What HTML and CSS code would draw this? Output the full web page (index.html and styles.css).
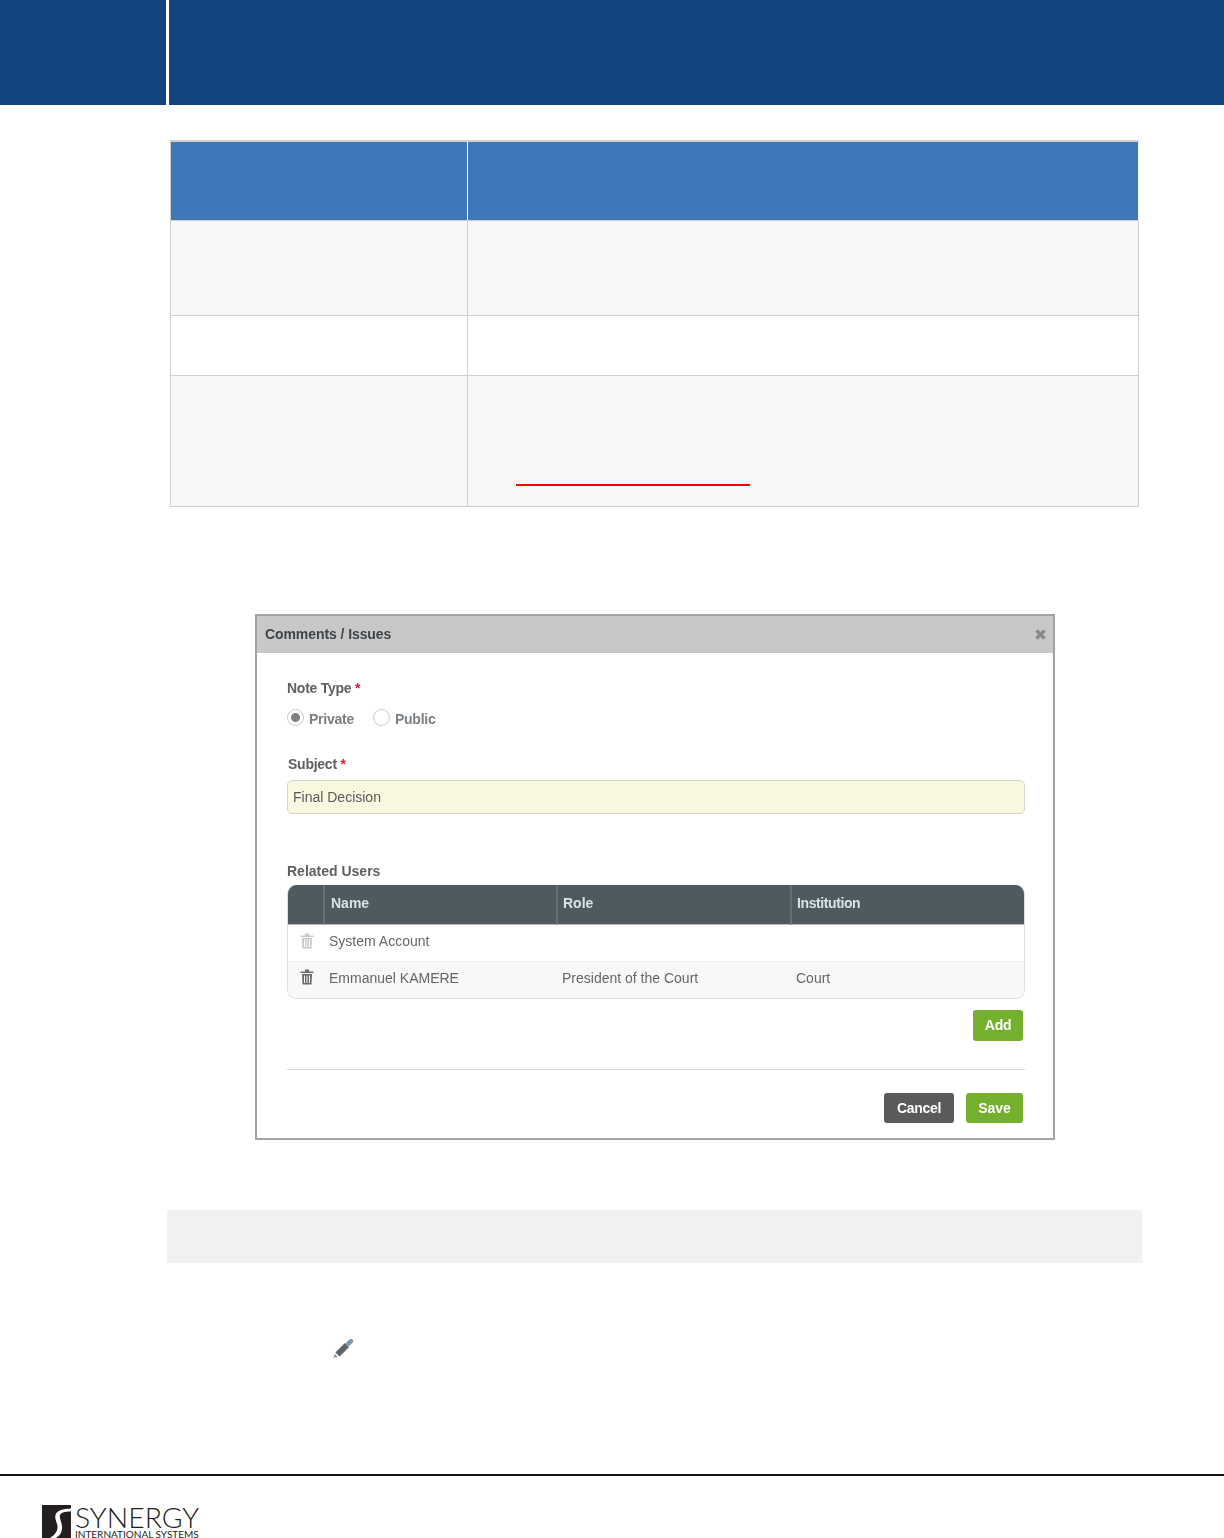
FILE: index.html
```html
<!DOCTYPE html>
<html lang="en">
  <head>
    <meta charset="UTF-8" />
    <title>Comments / Issues</title>
    <link rel="stylesheet" href="styles.css">
  </head>
  <body>
    <div class="topBar">
      <div class="topLeft"></div>
      <div class="topRight"></div>
    </div>

    <table class="docTable">
      <tr class="headRow"><th class="colOne"></th><th></th></tr>
      <tr class="rowOne"><td></td><td></td></tr>
      <tr class="rowTwo"><td></td><td></td></tr>
      <tr class="rowThree"><td></td><td><div class="redLink"></div></td></tr>
    </table>

    <div class="modal">
      <div class="modalTitle">
        <span>Comments / Issues</span>
        <svg class="closeIcon" width="11" height="11" viewBox="0 0 11 11">
          <path d="M1.500 1.500L9.500 9.500M9.500 1.500L1.500 9.500" stroke="#8a8a8a" stroke-width="3.400" />
        </svg>
      </div>
      <div class="modalBody">
        <div class="fieldLabel tightLabel">Note Type <span class="req">*</span></div>
        <div class="radioRow">
          <span class="radio radioOn"></span><span class="radioText">Private</span>
          <span class="radio"></span><span class="radioText">Public</span>
        </div>
        <div class="fieldLabel tightLabel subjectLabel">Subject <span class="req">*</span></div>
        <div class="subjectInput">Final Decision</div>
        <div class="fieldLabel usersLabel">Related Users</div>
        <table class="usersTable">
          <tr class="usersHead">
            <th class="iconCol"></th>
            <th class="nameCol">Name</th>
            <th class="roleCol">Role</th>
            <th class="instCol">Institution</th>
          </tr>
          <tr>
            <td class="iconCol">
              <svg class="trash trashOff" width="14" height="16" viewBox="0 0 14 16">
                <path d="M5 0.500h4v2h4.500v1.500h-13v-1.500h4.500z" />
                <path d="M2 5h10l-0.500 10.500h-9zM4 6.500v7.500h1v-7.500zM6.500 6.500v7.500h1v-7.500zM9 6.500v7.500h1v-7.500z" fill-rule="evenodd" />
              </svg>
            </td>
            <td>System Account</td>
            <td></td>
            <td></td>
          </tr>
          <tr class="altRow">
            <td class="iconCol">
              <svg class="trash" width="14" height="16" viewBox="0 0 14 16">
                <path d="M5 0.500h4v2h4.500v1.500h-13v-1.500h4.500z" />
                <path d="M2 5h10l-0.500 10.500h-9zM4 6.500v7.500h1v-7.500zM6.500 6.500v7.500h1v-7.500zM9 6.500v7.500h1v-7.500z" fill-rule="evenodd" />
              </svg>
            </td>
            <td>Emmanuel KAMERE</td>
            <td>President of the Court</td>
            <td>Court</td>
          </tr>
        </table>
        <div class="addRow"><button class="btn btnGreen btnAdd">Add</button></div>
        <div class="divider"></div>
        <div class="actions">
          <button class="btn btnDark">Cancel</button>
          <button class="btn btnGreen btnSave">Save</button>
        </div>
      </div>
    </div>

    <div class="noteBox"></div>

    <div class="pencilRow">
      <svg width="22" height="20" viewBox="0 0 22 20">
        <path d="M5.500 15.500L15 6" stroke="#5f6469" stroke-width="6" />
        <path d="M16.500 4.500L19 2.200" stroke="#7f95a8" stroke-width="4.500" stroke-linecap="round" />
        <path d="M1.500 19l1.200-4.300 3 3z" fill="#8c98a4" />
      </svg>
    </div>

    <div class="footer">
      <div class="logo">
        <svg class="logoMark" width="29" height="33" viewBox="0 0 29 33">
          <rect width="29" height="33" fill="#231f20" />
          <path d="M29 3.500C21 4 15 5 13.500 10C12.500 14 15 17 15.500 21C16 26 13 30 8 33H13.500C18 31 20.500 27 20 21C19.500 16 17 13 18 10C19 7.500 23 6.500 29 6.500z" fill="#fff" />
        </svg>
        <div class="logoText">
          <div class="logoName">SYNERGY</div>
          <div class="logoSub">INTERNATIONAL SYSTEMS</div>
        </div>
      </div>
    </div>
  </body>
</html>
```

FILE: styles.css
```css
html,
body {
  margin: 0;
  height: 1538px;
  overflow: hidden;
  background: #fff;
  font-family: "Liberation Sans", Arial, sans-serif;
}

.topBar {
  display: flex;
  height: 105px;
  gap: 3px;
}

.topLeft {
  width: 166px;
  background: #134480;
}

.topRight {
  flex: 1;
  background: #134480;
}

.docTable {
  width: 969px;
  margin: 35px 0 0 170px;
  border-collapse: collapse;
  table-layout: fixed;
  box-sizing: border-box;
}

.docTable td,
.docTable th {
  padding: 0;
  border: 1px solid #cfcfcf;
  background: #f7f7f7;
}

.docTable th {
  background: #4077b8;
}

.docTable .headRow th {
  border-top: 2px solid #cfcfcf;
  border-right-color: #fff;
}

.colOne {
  width: 296px;
}

.headRow {
  height: 79px;
}

.rowOne {
  height: 95px;
}

.docTable .rowTwo td {
  height: 59px;
  background: #fff;
}

.rowThree {
  height: 131px;
}

.rowThree td {
  vertical-align: top;
}

.redLink {
  width: 234px;
  height: 2px;
  margin: 108px 0 0 48px;
  background: #f00;
}

.modal {
  width: 800px;
  height: 526px;
  margin: 107px 0 0 255px;
  box-sizing: border-box;
  border: 2px solid #a3a3a3;
  color: #666;
  filter: blur(0.3px);
}

.modalTitle {
  display: flex;
  align-items: center;
  justify-content: space-between;
  height: 37px;
  padding: 0 7px 0 8px;
  background: #c8c8c8;
  color: #3d4548;
  font-size: 14px;
  font-weight: bold;
  letter-spacing: -0.08px;
}

.modalBody {
  padding: 26px 28px 0 30px;
}

.fieldLabel {
  height: 18px;
  font-size: 14px;
  font-weight: bold;
  line-height: 18px;
  color: #5e6163;
}

.tightLabel {
  letter-spacing: -0.25px;
}

.req {
  color: #e0193c;
}

.radioRow {
  display: flex;
  align-items: center;
  height: 18px;
  margin-top: 12px;
  font-size: 14px;
  font-weight: bold;
  letter-spacing: -0.25px;
  color: #7a7f85;
}

.radio {
  width: 15px;
  height: 15px;
  border: 1px solid #c8c8c8;
  border-radius: 50%;
  background: #fff;
}

.radioOn {
  background: radial-gradient(circle, #808080 0, #808080 4px, #fff 5px);
}

.radioText {
  margin: 2px 19px 0 5px;
}

.subjectLabel {
  margin: 28px 0 0 1px;
}

.subjectInput {
  height: 32px;
  margin-top: 7px;
  padding-left: 5px;
  border: 1px solid #d6d6c6;
  border-radius: 5px;
  background: #f9f8e0;
  font-size: 14px;
  line-height: 32px;
  color: #5b5b5b;
}

.usersLabel {
  margin-top: 48px;
}

.usersTable {
  width: 738px;
  margin-top: 5px;
  border-collapse: separate;
  border-spacing: 0;
  table-layout: fixed;
  border: 1px solid #dedede;
  border-top: 0;
  border-radius: 9px;
  overflow: hidden;
  font-size: 14px;
  color: #666;
}

.usersTable th {
  height: 40px;
  padding: 0 0 3px 6px;
  background: #4e5a5e;
  border-left: 2px solid #6b6f72;
  border-bottom: 1px solid #bbb;
  box-sizing: border-box;
  text-align: left;
  color: #d9e2e8;
  font-size: 14px;
}

.usersTable th.iconCol {
  border-left: 0;
}

.usersTable th.roleCol {
  padding-left: 5px;
}

.usersTable th.instCol {
  padding-left: 5px;
  letter-spacing: -0.4px;
}

.usersTable td {
  height: 36px;
  padding: 0 0 4px 6px;
  box-sizing: border-box;
}

.iconCol {
  width: 35px;
}

.usersTable td.iconCol {
  padding: 0 0 4px 12px;
}

.nameCol {
  width: 233px;
}

.roleCol {
  width: 234px;
}

.usersTable .altRow td {
  height: 37px;
  padding-bottom: 3px;
  background: #f7f8fa;
  border-top: 1px solid #eee;
}

.usersTable .altRow td.iconCol {
  padding-bottom: 6px;
}

.trash {
  display: block;
  fill: #6a6a6a;
}

.trashOff {
  fill: #c9c9c9;
}

.addRow {
  display: flex;
  justify-content: flex-end;
  margin: 11px 2px 0 0;
}

.btn {
  height: 30px;
  padding: 0;
  border: 0;
  border-radius: 3px;
  font-family: "Liberation Sans", Arial, sans-serif;
  font-size: 14px;
  font-weight: bold;
  color: #fff;
}

.btnGreen {
  background: #74af2d;
}

.btnDark {
  width: 70px;
  background: #5a5a5a;
  letter-spacing: -0.3px;
}

.btnAdd {
  width: 50px;
  height: 31px;
  letter-spacing: -0.3px;
}

.btnSave {
  width: 57px;
}

.divider {
  height: 1px;
  margin-top: 28px;
  background: #d5d5d5;
}

.actions {
  display: flex;
  justify-content: flex-end;
  gap: 12px;
  margin: 23px 2px 0 0;
}

.noteBox {
  width: 975px;
  height: 53px;
  margin: 70px 0 0 167px;
  background: #f1f1f1;
}

.pencilRow {
  height: 19px;
  margin: 76px 0 0 332px;
}

.footer {
  margin-top: 116px;
  border-top: 2px solid #111;
}

.logo {
  display: flex;
  gap: 4px;
  margin: 29px 0 0 42px;
}

.logoName {
  font-family: Lato, sans-serif;
  font-weight: 300;
  font-size: 28.400px;
  line-height: 24px;
  color: #231f20;
}

.logoSub {
  margin-top: 1px;
  font-family: Lato, sans-serif;
  font-size: 10px;
  line-height: 8px;
  color: #231f20;
  white-space: nowrap;
}
```
